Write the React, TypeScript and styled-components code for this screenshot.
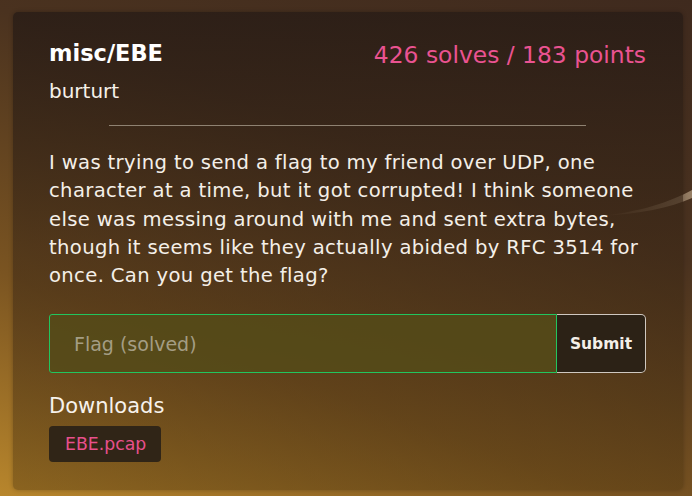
import React from "react";
import styled, { createGlobalStyle } from "styled-components";

const Global = createGlobalStyle`
  html, body { margin: 0; padding: 0; }
  body {
    width: 692px;
    height: 496px;
    overflow: hidden;
    font-family: "DejaVu Sans", "Open Sans", sans-serif;
  }
`;

const Page = styled.div`
  position: relative;
  box-sizing: border-box;
  width: 692px;
  height: 496px;
  padding: 12px 9px 6px 13px;
  background: linear-gradient(200deg, #3f2a1e 0%, #4a321f 35%, #7a5421 70%, #b8862c 100%);
  overflow: hidden;
`;

const Swoosh = styled.svg`
  position: absolute;
  left: 0;
  top: 0;
  pointer-events: none;
`;

const Card = styled.div`
  position: relative;
  box-sizing: border-box;
  height: 100%;
  border-radius: 5px;
  padding: 27px 37px 0 36px;
  background: linear-gradient(180deg, rgba(40, 28, 22, 0.82) 0%, rgba(60, 40, 22, 0.6) 50%, rgba(80, 55, 15, 0.42) 100%);
  box-shadow: 0 0 4px rgba(0, 0, 0, 0.25);
  color: #f2ece6;
`;

const Header = styled.div`
  display: flex;
  justify-content: space-between;
  align-items: flex-start;
`;

const TitleBlock = styled.div`
  display: flex;
  flex-direction: column;
`;

const Title = styled.h1`
  margin: 0;
  font-size: 22.5px;
  font-weight: 700;
  line-height: 28px;
  color: #ffffff;
`;

const Author = styled.div`
  margin-top: 12px;
  font-size: 20px;
  line-height: 24px;
  color: #f6f1ea;
`;

const Score = styled.div`
  margin-top: 2px;
  font-size: 23.4px;
  line-height: 28px;
  color: #ea5391;
`;

const Divider = styled.hr`
  width: 80%;
  margin: 22px auto 23px;
  border: none;
  border-top: 1px solid #8f8272;
`;

const Description = styled.p`
  margin: 0;
  font-size: 19.6px;
  letter-spacing: 0.35px;
  line-height: 28.3px;
  white-space: nowrap;
  color: #f4efe8;
`;

const FlagForm = styled.form`
  display: flex;
  margin-top: 24px;
  height: 59px;
`;

const FlagInput = styled.input`
  flex: 1;
  box-sizing: border-box;
  min-width: 0;
  padding: 0 24px;
  border: 1.5px solid #22c55e;
  border-radius: 3px 0 0 3px;
  background: rgba(85, 75, 25, 0.85);
  font-family: inherit;
  font-size: 19px;
  color: #f4efe8;
  outline: none;
  &::placeholder { color: #a49d84; }
`;

const SubmitButton = styled.button`
  box-sizing: border-box;
  width: 89px;
  border: 1px solid #cfc8c0;
  border-left: none;
  border-radius: 0 5px 5px 0;
  background: #2c2216;
  font-family: inherit;
  font-size: 15.5px;
  font-weight: 700;
  color: #f4efe8;
`;

const SectionLabel = styled.div`
  margin-top: 19px;
  font-size: 21px;
  line-height: 28px;
  color: #f7f2ec;
`;

const Files = styled.div`
  display: flex;
  gap: 8px;
  margin-top: 6px;
`;

const FileButton = styled.a`
  display: inline-flex;
  align-items: center;
  height: 36px;
  padding: 0 15px 0 16px;
  border-radius: 4px;
  background: #302517;
  font-size: 17.3px;
  color: #e8508c;
  text-decoration: none;
`;

const lines = [
  "I was trying to send a flag to my friend over UDP, one",
  "character at a time, but it got corrupted! I think someone",
  "else was messing around with me and sent extra bytes,",
  "though it seems like they actually abided by RFC 3514 for",
  "once. Can you get the flag?",
];

export default function App() {
  return (
    <>
      <Global />
      <Page>
        <Swoosh width="692" height="496" viewBox="0 0 692 496">
          <defs>
            <linearGradient id="sw" x1="0" y1="0" x2="1" y2="0">
              <stop offset="0" stopColor="#c8b090" stopOpacity="0" />
              <stop offset="1" stopColor="#d8c0a0" stopOpacity="0.55" />
            </linearGradient>
          </defs>
          <path d="M600 216 C 640 212, 670 202, 692 190 L 692 198 C 670 208, 640 214, 600 216 Z" fill="url(#sw)" />
        </Swoosh>
        <Card>
          <Header>
            <TitleBlock>
              <Title>misc/EBE</Title>
              <Author>burturt</Author>
            </TitleBlock>
            <Score>426 solves / 183 points</Score>
          </Header>
          <Divider />
          <Description>
            {lines.map((l, i) => (
              <React.Fragment key={i}>
                {l}
                {i < lines.length - 1 && <br />}
              </React.Fragment>
            ))}
          </Description>
          <FlagForm onSubmit={(e) => e.preventDefault()}>
            <FlagInput placeholder="Flag (solved)" />
            <SubmitButton type="submit">Submit</SubmitButton>
          </FlagForm>
          <SectionLabel>Downloads</SectionLabel>
          <Files>
            <FileButton href="#">EBE.pcap</FileButton>
          </Files>
        </Card>
      </Page>
    </>
  );
}
